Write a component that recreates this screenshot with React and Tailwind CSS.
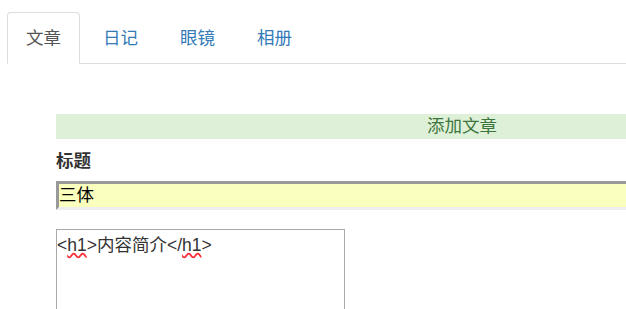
import React from "react";

const tabs = ["文章", "日记", "眼镜", "相册"];

function App() {
  return (
    <div
      className="w-full h-[309px] overflow-hidden bg-white"
      style={{ fontFamily: '"Liberation Sans", "Noto Sans CJK SC", sans-serif' }}
    >
      {/* Tabs */}
      <div className="pt-[12px] pl-[7px]">
        <ul className="flex border-b border-[#dddddd] w-[1000px]">
          {tabs.map((t, i) => (
            <li
              key={t}
              className={
                i === 0
                  ? "w-[73px] h-[52px] mb-[-1px] mr-[4px] flex items-center justify-center text-[17.5px] text-[#555555] bg-white border border-[#dddddd] border-b-transparent rounded-t-[4px]"
                  : "w-[73px] h-[52px] mb-[-1px] mr-[4px] flex items-center justify-center text-[17.5px] text-[#337ab7] border border-transparent"
              }
            >
              {t}
            </li>
          ))}
        </ul>
      </div>

      {/* Form */}
      <div className="pl-[56px] pt-[50px]">
        <div className="w-[812px] h-[25px] bg-[#dff0d8] text-[#3c763d] text-[17.5px] leading-[25px] text-center">
          添加文章
        </div>
        <div className="mt-[12px] text-[17.5px] font-bold text-[#333333] leading-[20px]">标题</div>
        <div className="mt-[10px] w-[900px] h-[29px] bg-[#faffbd] border-[3px] border-t-[#999999] border-l-[#999999] border-r-[#eeeeee] border-b-[#eeeeee] pl-[0px] text-[17.5px] leading-[23px] text-black">
          三体
        </div>
        <div className="mt-[19px] w-[289px] h-[100px] border border-[#a9a9a9] text-[17.5px] leading-[20px] text-[#333333] pt-[5px]">
          &lt;<span className="underline decoration-wavy decoration-red-500">h1</span>&gt;内容简介&lt;/<span className="underline decoration-wavy decoration-red-500">h1</span>&gt;
        </div>
      </div>
    </div>
  );
}

export default App;
